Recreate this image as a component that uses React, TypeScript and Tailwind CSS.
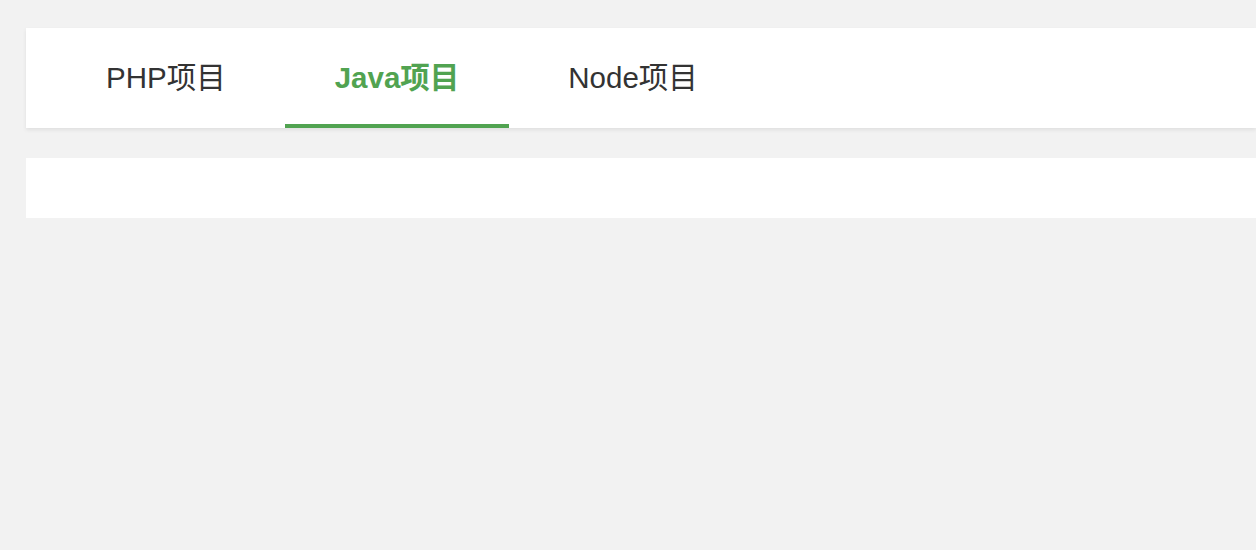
import React from "react";

export default function App() {
  const tabs = ["PHP项目", "Java项目", "Node项目"];
  const active = 1;
  return (
    <div
      className="w-[1256px] h-[550px] overflow-hidden bg-[#f2f2f2] pt-[28px] pl-[26px]"
      style={{ fontFamily: '"Liberation Sans", "Noto Sans CJK SC", sans-serif' }}
    >
      <div className="h-[100px] bg-white shadow-[0_2px_4px_rgba(0,0,0,0.08)] flex items-stretch pl-[30px] gap-[9px]">
        {tabs.map((t, i) => (
          <div
            key={t}
            className={
              i === active
                ? "relative flex items-center px-[50px] text-[29.5px] font-bold text-[#51a351]"
                : "relative flex items-center px-[50px] text-[29.5px] text-[#333333]"
            }
          >
            {t}
            {i === active && (
              <div className="absolute left-0 right-0 bottom-0 h-[4px] bg-[#51a351]" />
            )}
          </div>
        ))}
      </div>
      <div className="mt-[30px] h-[60px] bg-white" />
    </div>
  );
}
